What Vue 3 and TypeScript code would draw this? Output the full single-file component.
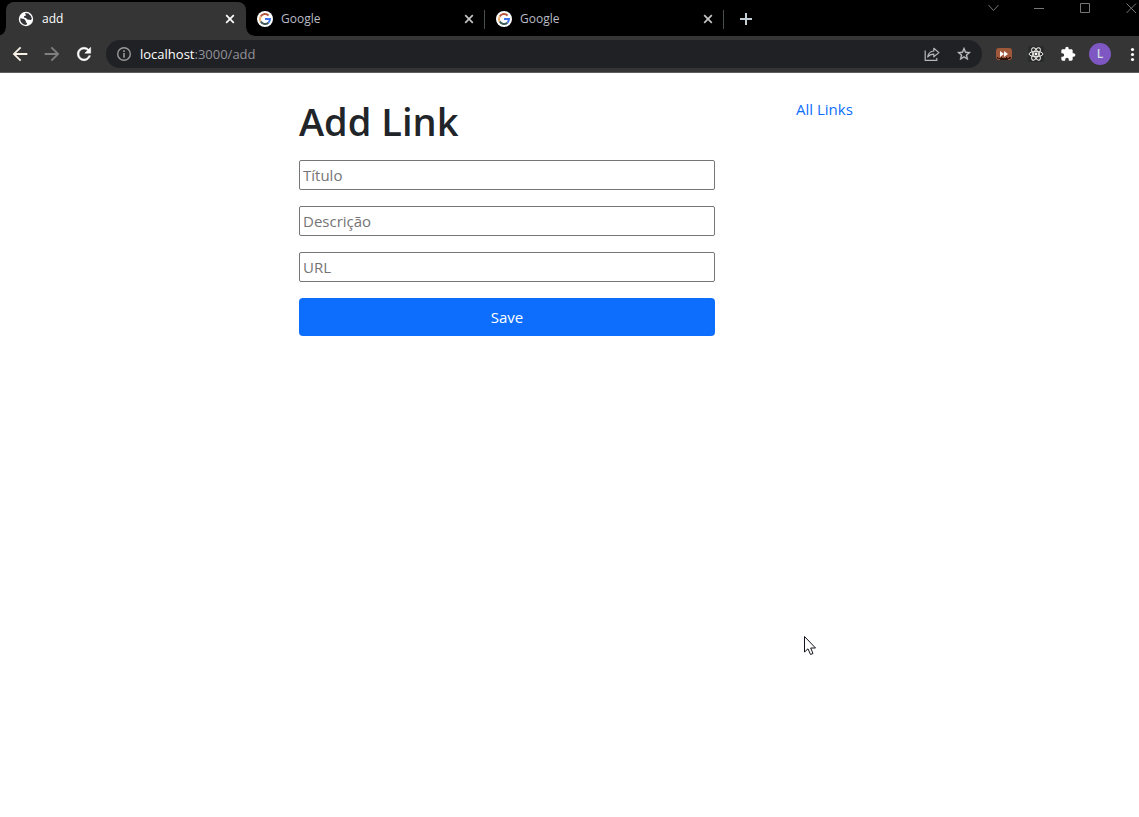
<script setup lang="ts">
import { ref } from 'vue'

interface Tab {
  id: number
  title: string
  kind: 'globe' | 'google'
}

const tabs: Tab[] = [
  { id: 1, title: 'add', kind: 'globe' },
  { id: 2, title: 'Google', kind: 'google' },
  { id: 3, title: 'Google', kind: 'google' },
]
const activeTab = ref(1)

const fields = [
  { name: 'title', placeholder: 'Título' },
  { name: 'description', placeholder: 'Descrição' },
  { name: 'url', placeholder: 'URL' },
]
const values = ref<Record<string, string>>({ title: '', description: '', url: '' })
</script>

<template>
  <div class="browser">
    <header class="chrome">
      <div class="tab-strip">
        <div
          v-for="tab in tabs"
          :key="tab.id"
          class="tab"
          :class="{ active: tab.id === activeTab }"
        >
          <button class="tab-select" type="button" @click="activeTab = tab.id">
            <svg v-if="tab.kind === 'globe'" class="favicon" viewBox="0 0 16 16" aria-hidden="true">
              <circle cx="8" cy="8" r="7.2" fill="#fff" />
              <path d="M2.2 7.2 6.1 8.1 7.9 10 7.8 11.4 9.2 12.1 8.3 14A6.1 6.1 0 0 1 2.2 7.2Z" fill="#35363a" />
              <path d="M7.2 2.1 10.4 2.6 12.9 5.1 13.9 7.9 12.7 9.1 9.3 8.4 7.9 6.9 5.9 6.5 6.2 5.1 7.9 4.7Z" fill="#35363a" />
            </svg>
            <svg v-else class="favicon" viewBox="0 0 16 16" aria-hidden="true">
              <circle cx="8" cy="8" r="8" fill="#fff" />
              <g fill="none" stroke-width="2">
                <path d="M3.7 5.4A5 5 0 0 1 11.6 4.5" stroke="#b5573a" />
                <path d="M3.7 10.6A5 5 0 0 1 3.7 5.4" stroke="#edb576" />
                <path d="M11.4 11.7A5 5 0 0 1 3.7 10.6" stroke="#3f5a5a" />
                <path d="M8 8H13A5 5 0 0 1 11.4 11.7" stroke="#3f72e8" />
              </g>
            </svg>
            <span>{{ tab.title }}</span>
          </button>
          <button class="tab-close" type="button" :aria-label="`Close ${tab.title}`">
            <svg width="10" height="10" viewBox="0 0 10 10" aria-hidden="true">
              <path d="M1.2 1.2 8.8 8.8M8.8 1.2 1.2 8.8" fill="none" stroke="currentColor" stroke-width="1.7" />
            </svg>
          </button>
        </div>
        <button class="new-tab" type="button" aria-label="New tab">
          <svg width="12" height="12" viewBox="0 0 12 12" aria-hidden="true">
            <path d="M6 0V12M0 6H12" fill="none" stroke="currentColor" stroke-width="2" />
          </svg>
        </button>
        <div class="window-controls">
          <button type="button" aria-label="Search tabs">
            <svg width="12" height="12" viewBox="0 0 12 12"><path d="M1.5 3 6.5 8.5 11.5 3" /></svg>
          </button>
          <button type="button" aria-label="Minimize">
            <svg width="12" height="12" viewBox="0 0 12 12"><path d="M1 6.5H11" /></svg>
          </button>
          <button type="button" aria-label="Maximize">
            <svg width="12" height="12" viewBox="0 0 12 12"><path d="M1.5 1.5H10.5V10.5H1.5Z" /></svg>
          </button>
          <button type="button" aria-label="Close window">
            <svg width="12" height="12" viewBox="0 0 12 12"><path d="M1.5 1.5 11 11M11 1.5 1.5 11" /></svg>
          </button>
        </div>
      </div>

      <div class="toolbar">
        <nav class="history" aria-label="History">
          <button type="button" aria-label="Back">
            <svg width="22" height="22" viewBox="0 0 24 24" fill="#f6f0e6">
              <path d="M20 11H7.83l5.59-5.59L12 4l-8 8 8 8 1.41-1.41L7.83 13H20z" />
            </svg>
          </button>
          <button type="button" aria-label="Forward">
            <svg width="22" height="22" viewBox="0 0 24 24" fill="#808080">
              <path d="M12 4l-1.41 1.41L16.17 11H4v2h12.17l-5.58 5.59L12 20l8-8z" />
            </svg>
          </button>
          <button type="button" aria-label="Reload">
            <svg width="20" height="20" viewBox="0 0 24 24" fill="#fff" stroke="#fff" stroke-width=".6">
              <path d="M17.65 6.35C16.2 4.9 14.21 4 12 4c-4.42 0-7.99 3.58-7.99 8s3.57 8 7.99 8c3.73 0 6.84-2.55 7.73-6h-2.08c-.82 2.33-3.04 4-5.65 4-3.31 0-6-2.69-6-6s2.69-6 6-6c1.66 0 3.14.69 4.22 1.78L13 11h7V4z" />
            </svg>
          </button>
        </nav>
        <div class="omnibox">
          <svg width="16" height="16" viewBox="0 0 16 16" aria-hidden="true">
            <circle cx="8" cy="8" r="6.3" fill="none" stroke="#9a9a9a" stroke-width="1.4" />
            <path d="M7.2 4.3H8.8V5.9H7.2ZM7.2 7H8.8V11.7H7.2Z" fill="#9a9a9a" />
          </svg>
          <div class="address"><span class="host">localhost</span>:3000/add</div>
          <button type="button" aria-label="Share">
            <svg width="16" height="16" viewBox="0 0 16 16" fill="none" stroke="#b4b8ba" stroke-width="1.2">
              <path d="M1.2 4.5V14.3H12.8V12" />
              <path d="M3.7 11C4.2 7.3 6.3 5.3 9.8 5V2.3L14.9 6.6 9.8 10.8V8.2C7.2 8.2 5.1 9 3.7 11Z" stroke-linejoin="round" />
            </svg>
          </button>
          <button type="button" aria-label="Bookmark this page">
            <svg width="16" height="16" viewBox="0 0 24 24" fill="#c0c3c4">
              <path d="M22 9.24l-7.19-.62L12 2 9.19 8.63 2 9.24l5.46 4.73L5.82 21 12 17.27 18.18 21l-1.63-7.03zM12 15.4l-3.76 2.27 1-4.28-3.32-2.88 4.38-.38L12 6.1l1.71 4.04 4.38.38-3.32 2.88 1 4.28z" stroke="#c0c3c4" stroke-width=".5" />
            </svg>
          </button>
        </div>
        <div class="extensions">
          <button type="button" aria-label="Fast forward extension">
            <svg width="16" height="16" viewBox="0 0 16 16">
              <rect y="2" width="16" height="12" rx="3" fill="#a0583a" />
              <path d="M1 11H2V12H5V11H6V12H10V11H11V12H13V11H15V12L14 13H12V14H4V13H2L1 12Z" fill="#32150b" />
              <path d="M4 5 8 8 4 11ZM8 5 12 8 8 11Z" fill="#fff" />
            </svg>
          </button>
          <button type="button" aria-label="React developer tools">
            <svg width="16" height="16" viewBox="0 0 16 16">
              <rect width="16" height="16" fill="#292b2c" />
              <g fill="none" stroke="#efefe8" stroke-width="1">
                <ellipse cx="8" cy="8" rx="6.9" ry="2.7" />
                <ellipse cx="8" cy="8" rx="6.9" ry="2.7" transform="rotate(60 8 8)" />
                <ellipse cx="8" cy="8" rx="6.9" ry="2.7" transform="rotate(120 8 8)" />
              </g>
              <circle cx="8" cy="8" r="1.4" fill="#fff" />
            </svg>
          </button>
          <button type="button" aria-label="Extensions">
            <svg width="16" height="16" viewBox="0 0 24 24" fill="#fff">
              <path d="M20.5 11H19V7c0-1.1-.9-2-2-2h-4V3.5C13 2.12 11.88 1 10.5 1S8 2.12 8 3.5V5H4c-1.1 0-1.99.9-1.99 2v3.8H3.5c1.49 0 2.7 1.21 2.7 2.7s-1.21 2.7-2.7 2.7H2V20c0 1.1.9 2 2 2h3.8v-1.5c0-1.49 1.21-2.7 2.7-2.7 1.49 0 2.7 1.21 2.7 2.7V22H17c1.1 0 2-.9 2-2v-4h1.5c1.38 0 2.5-1.12 2.5-2.5S21.88 11 20.5 11z" />
            </svg>
          </button>
          <button type="button" aria-label="Profile"><span class="avatar">L</span></button>
          <button type="button" aria-label="Menu">
            <svg width="16" height="16" viewBox="0 0 16 16" fill="#fff">
              <circle cx="8.5" cy="3.5" r="1.6" />
              <circle cx="8.5" cy="8.5" r="1.6" />
              <circle cx="8.5" cy="13.5" r="1.6" />
            </svg>
          </button>
        </div>
      </div>
    </header>

    <main class="page">
      <form class="link-form" @submit.prevent>
        <h1>Add Link</h1>
        <input
          v-for="field in fields"
          :key="field.name"
          v-model="values[field.name]"
          type="text"
          :name="field.name"
          :placeholder="field.placeholder"
          :aria-label="field.placeholder"
        />
        <button class="save" type="submit">Save</button>
      </form>
      <aside class="side"><a href="#all">All Links</a></aside>
    </main>

    <svg class="pointer" width="14" height="21" viewBox="0 0 14 21" aria-hidden="true">
      <path d="M.5 .5V16L4 12.8 6.5 18.5 9 17.5 6.7 12H11.5Z" fill="#fff" stroke="#14141c" />
    </svg>
  </div>
</template>

<style>
body {
  margin: 0;
  background: #fff;
}
</style>

<style scoped>
.browser {
  position: relative;
  min-height: 100vh;
  overflow: hidden;
  font-family: "Segoe UI", "Open Sans", "Noto Sans", sans-serif;
  color: #212529;
}
button {
  margin: 0;
  padding: 0;
  border: 0;
  background: none;
  font-family: inherit;
  color: inherit;
}
svg {
  display: block;
  flex: none;
}
.chrome {
  background: #353535;
  border-bottom: 1px solid #5e5e5e;
}
.tab-strip {
  display: flex;
  height: 36px;
  padding-left: 6px;
  background: #000;
  overflow: hidden;
}
.tab {
  display: flex;
  align-items: center;
  box-sizing: border-box;
  width: 240px;
  height: 34px;
  margin-top: 2px;
  margin-right: -1px;
  padding: 0 11px 0 12px;
  position: relative;
  color: #b9bbc6;
}
.tab:not(.active)::after {
  content: "";
  position: absolute;
  right: 0;
  top: 8px;
  width: 1px;
  height: 19px;
  background: #4a5052;
}
.tab.active {
  border-radius: 8px 8px 0 0;
  background: #353535;
  color: #fff;
}
.tab.active::before,
.tab.active::after {
  content: "";
  position: absolute;
  bottom: 0;
  width: 8px;
  height: 8px;
}
.tab.active::before {
  right: 100%;
  background: radial-gradient(circle at 0 0, transparent 7px, #353535 8px);
}
.tab.active::after {
  left: 100%;
  background: radial-gradient(circle at 100% 0, transparent 7px, #353535 8px);
}
.tab-select {
  display: flex;
  flex: 1;
  align-items: center;
  gap: 8px;
  height: 34px;
  font-size: 12px;
  line-height: 16px;
}
.favicon {
  width: 16px;
  height: 16px;
}
.tab-close {
  display: grid;
  place-items: center;
  width: 10px;
  height: 16px;
}
.tab:not(.active) .tab-close {
  color: #c4c4c4;
}
.new-tab {
  display: grid;
  place-items: center;
  width: 46px;
  height: 38px;
  color: #c3cfd4;
}
.window-controls {
  display: flex;
  margin-left: auto;
  margin-right: -15px;
}
.window-controls button {
  display: grid;
  place-items: center;
  width: 46px;
  height: 16px;
}
.window-controls path {
  fill: none;
  stroke: #777;
}
.toolbar {
  display: flex;
  align-items: center;
  height: 36px;
  overflow: hidden;
}
.history,
.extensions {
  display: flex;
}
.history {
  padding: 0 6px 0 4px;
}
.history button,
.extensions button,
.omnibox button {
  display: grid;
  place-items: center;
  width: 32px;
  height: 28px;
}
.omnibox {
  display: flex;
  flex: 1;
  align-items: center;
  height: 28px;
  padding: 0 2px 0 10px;
  border-radius: 14px;
  background: #202124;
}
.address {
  flex: 1;
  padding-left: 8px;
  font-size: 13px;
  line-height: 20px;
  color: #92929a;
}
.host {
  color: #fff;
}
.extensions {
  margin-left: 6px;
  margin-right: -9px;
}
.avatar {
  display: grid;
  place-items: center;
  width: 22px;
  height: 22px;
  border-radius: 50%;
  background: #7e57c2;
  font-size: 12px;
  font-weight: 600;
  line-height: 22px;
  color: #cfdde0;
}
.page {
  display: grid;
  grid-template-columns: 299fr 416fr 424fr;
  padding-top: 24px;
}
.link-form {
  grid-column: 2;
  display: flex;
  flex-direction: column;
  gap: 16px;
}
h1 {
  margin: 0 0 -1px;
  font-size: 38px;
  font-weight: 600;
  line-height: 48px;
}
input {
  box-sizing: border-box;
  width: 100%;
  height: 30px;
  margin: 0;
  padding: 1px 3px;
  border: 1px solid #767676;
  border-radius: 2px;
  background: #fff;
  font-family: inherit;
  font-size: 15px;
  color: inherit;
}
input::placeholder {
  color: #757575;
  opacity: 1;
}
.save {
  height: 38px;
  border-radius: 4px;
  background: #0d6efd;
  font-size: 15px;
  line-height: 24px;
  color: #fff;
}
.side {
  padding-left: 81px;
  font-size: 15px;
  line-height: 24px;
}
.side a {
  color: #0d6efd;
  text-decoration: none;
}
.pointer {
  position: absolute;
  left: 804px;
  top: 636px;
}
</style>
